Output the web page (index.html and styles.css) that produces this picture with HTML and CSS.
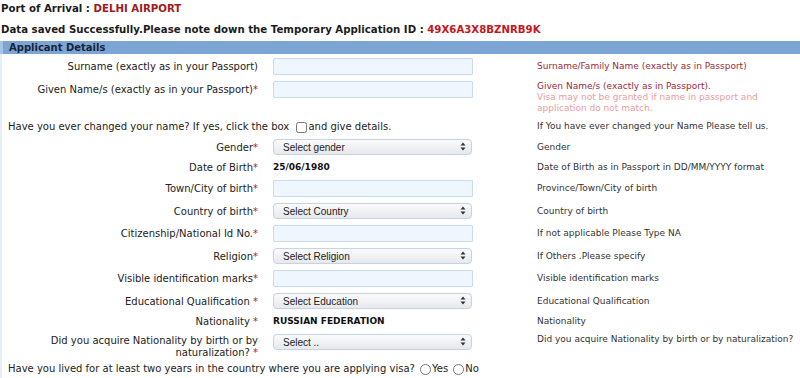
FILE: index.html
```html
<!DOCTYPE html>
<html lang="en">
<head>
    <meta charset="UTF-8">
    <title>Applicant Details</title>
    <link rel="stylesheet" href="styles.css">
</head>
<body>
    <p class="top-line">Port of Arrival : <span class="arrival">DELHI AIRPORT</span></p>
    <p class="top-line saved">Data saved Successfully.Please note down the Temporary Application ID : <span class="app-id">49X6A3X8BZNRB9K</span></p>

    <div class="section-bar">Applicant Details</div>

    <div class="form-table">
        <div class="row">
            <div class="label">Surname (exactly as in your Passport)</div>
            <div class="field"><input type="text" class="txt"></div>
            <div class="help help-red">Surname/Family Name (exactly as in Passport)</div>
        </div>

        <div class="row row-top">
            <div class="label">Given Name/s (exactly as in your Passport)<span class="req">*</span></div>
            <div class="field"><input type="text" class="txt"></div>
            <div class="help help-red">Given Name/s (exactly as in Passport).<br><span class="help-pink">Visa may not be granted if name in passport and application do not match.</span></div>
        </div>

        <div class="row row-text">
            <div class="label wide">Have you ever changed your name? If yes, click the box <input type="checkbox" class="chk">and give details.</div>
            <div class="help">If You have ever changed your Name Please tell us.</div>
        </div>

        <div class="row">
            <div class="label">Gender<span class="req">*</span></div>
            <div class="field">
                <div class="sel">
                    <select><option>Select gender</option></select>
                    <svg class="arrows" width="6" height="9" viewBox="0 0 6 9"><path d="M3 0.5 L5.5 3.5 H0.5 Z M3 8.5 L5.5 5.5 H0.5 Z" fill="#333"/></svg>
                </div>
            </div>
            <div class="help">Gender</div>
        </div>

        <div class="row row-text">
            <div class="label">Date of Birth<span class="req">*</span></div>
            <div class="field value">25/06/1980</div>
            <div class="help">Date of Birth as in Passport in DD/MM/YYYY format</div>
        </div>

        <div class="row">
            <div class="label">Town/City of birth<span class="req">*</span></div>
            <div class="field"><input type="text" class="txt"></div>
            <div class="help">Province/Town/City of birth</div>
        </div>

        <div class="row">
            <div class="label">Country of birth<span class="req">*</span></div>
            <div class="field">
                <div class="sel">
                    <select><option>Select Country</option></select>
                    <svg class="arrows" width="6" height="9" viewBox="0 0 6 9"><path d="M3 0.5 L5.5 3.5 H0.5 Z M3 8.5 L5.5 5.5 H0.5 Z" fill="#333"/></svg>
                </div>
            </div>
            <div class="help">Country of birth</div>
        </div>

        <div class="row">
            <div class="label">Citizenship/National Id No.<span class="req">*</span></div>
            <div class="field"><input type="text" class="txt"></div>
            <div class="help">If not applicable Please Type NA</div>
        </div>

        <div class="row">
            <div class="label">Religion<span class="req">*</span></div>
            <div class="field">
                <div class="sel">
                    <select><option>Select Religion</option></select>
                    <svg class="arrows" width="6" height="9" viewBox="0 0 6 9"><path d="M3 0.5 L5.5 3.5 H0.5 Z M3 8.5 L5.5 5.5 H0.5 Z" fill="#333"/></svg>
                </div>
            </div>
            <div class="help">If Others .Please specify</div>
        </div>

        <div class="row">
            <div class="label">Visible identification marks<span class="req">*</span></div>
            <div class="field"><input type="text" class="txt"></div>
            <div class="help">Visible identification marks</div>
        </div>

        <div class="row">
            <div class="label">Educational Qualification <span class="req">*</span></div>
            <div class="field">
                <div class="sel">
                    <select><option>Select Education</option></select>
                    <svg class="arrows" width="6" height="9" viewBox="0 0 6 9"><path d="M3 0.5 L5.5 3.5 H0.5 Z M3 8.5 L5.5 5.5 H0.5 Z" fill="#333"/></svg>
                </div>
            </div>
            <div class="help">Educational Qualification</div>
        </div>

        <div class="row row-text">
            <div class="label">Nationality <span class="req">*</span></div>
            <div class="field value">RUSSIAN FEDERATION</div>
            <div class="help">Nationality</div>
        </div>

        <div class="row row-top row-two">
            <div class="label">Did you acquire Nationality by birth or by naturalization? <span class="req">*</span></div>
            <div class="field">
                <div class="sel">
                    <select><option>Select ..</option></select>
                    <svg class="arrows" width="6" height="9" viewBox="0 0 6 9"><path d="M3 0.5 L5.5 3.5 H0.5 Z M3 8.5 L5.5 5.5 H0.5 Z" fill="#333"/></svg>
                </div>
            </div>
            <div class="help">Did you acquire Nationality by birth or by naturalization?</div>
        </div>

        <div class="row row-text">
            <div class="label wide">Have you lived for at least two years in the country where you are applying visa? <input type="radio" name="lived" class="rad">Yes <input type="radio" name="lived" class="rad">No</div>
        </div>
    </div>
</body>
</html>
```

FILE: styles.css
```css
body {
    margin: 0;
    font-family: "DejaVu Sans", Verdana, sans-serif;
    font-size: 10px;
    color: #222;
    background-color: #fff;
}

.top-line {
    margin: 0;
    padding: 2px 0 0 1px;
    font-weight: bold;
    font-size: 10.2px;
    line-height: 13px;
    color: #1c1c1c;
}

.saved {
    padding-top: 8px;
}

.arrival {
    color: #9e1b1b;
}

.app-id {
    color: #c4161c;
}

.section-bar {
    margin-top: 5px;
    background-color: #7ca5d3;
    border-left: 3px solid #a9c4e3;
    padding: 0 0 0 6px;
    height: 13px;
    line-height: 13px;
    font-weight: bold;
    color: #17233a;
}

.form-table {
    border-left: 2px solid #e6eef8;
    padding-top: 1px;
    padding-bottom: 10px;
}

.row {
    display: grid;
    grid-template-columns: 262px 263px 1fr;
    align-items: center;
    padding: 3px 0;
}

.row-top {
    align-items: start;
}

.row-text {
    padding: 3px 0 3px;
}

.row-two {
    padding-bottom: 0;
}

.label {
    text-align: right;
    padding-right: 6px;
    line-height: 13px;
}

.row-top .label {
    padding-top: 2px;
}

.row-two .label {
    padding-top: 1px;
    line-height: 12px;
}

.label.wide {
    grid-column: 1 / 3;
    text-align: left;
    padding-left: 6px;
    white-space: nowrap;
}

.req {
    color: #b3222a;
}

.field {
    padding-left: 9px;
}

.value {
    font-weight: bold;
    font-size: 9px;
    line-height: 13px;
    color: #111;
}

.txt {
    display: block;
    box-sizing: border-box;
    width: 200px;
    height: 17px;
    margin: 0;
    border: 1px solid #c8dbf0;
    background-color: #f0f6fd;
    border-radius: 1px;
}

.sel {
    position: relative;
    width: 199px;
}

.sel select {
    display: block;
    appearance: none;
    -webkit-appearance: none;
    box-sizing: border-box;
    width: 199px;
    height: 16px;
    margin: 0;
    padding: 0 0 0 9px;
    border: 1px solid #c5d3e2;
    border-radius: 4px;
    background: linear-gradient(#fbfbfc, #e6e8ec);
    box-shadow: 0 0 1px #d7e4f2;
    font-family: "Liberation Sans", Arial, sans-serif;
    font-size: 10px;
    color: #222;
}

.arrows {
    position: absolute;
    right: 6px;
    top: 3px;
}

.help {
    padding-left: 10px;
    font-size: 9px;
    line-height: 11px;
    color: #333;
}

.help-red {
    color: #9c2a3a;
}

.help-pink {
    color: #ec9c9c;
}

.chk {
    width: 11px;
    height: 11px;
    margin: 0 1px 0 4px;
    vertical-align: middle;
}

.rad {
    width: 11px;
    height: 11px;
    margin: 0 1px 0 2px;
    vertical-align: middle;
}
```
